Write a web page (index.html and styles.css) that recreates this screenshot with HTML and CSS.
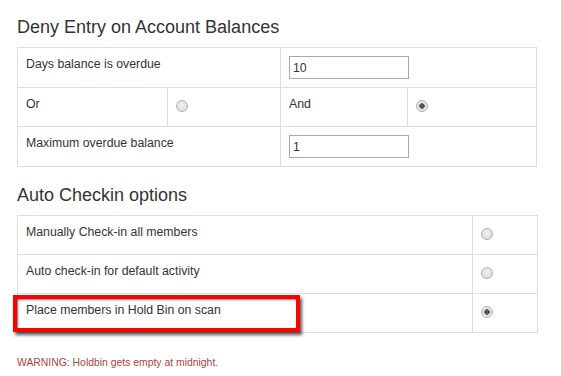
FILE: index.html
```html
<!DOCTYPE html>
<html lang="en">
<head>
    <meta charset="UTF-8">
    <meta name="viewport" content="width=device-width, initial-scale=1.0">
    <title>Member Settings</title>
    <link rel="stylesheet" href="styles.css">
</head>
<body>
    <div class="settings">
        <h2 class="section-title">Deny Entry on Account Balances</h2>
        <table class="grid deny">
            <colgroup>
                <col class="c1"><col class="c2"><col class="c3"><col class="c4">
            </colgroup>
            <tr>
                <td colspan="2">Days balance is overdue</td>
                <td colspan="2"><input type="text" class="field" value="10"></td>
            </tr>
            <tr class="choice-row">
                <td>Or</td>
                <td><input type="radio" class="radio" name="mode"></td>
                <td>And</td>
                <td><input type="radio" class="radio" name="mode" checked></td>
            </tr>
            <tr>
                <td colspan="2">Maximum overdue balance</td>
                <td colspan="2"><input type="text" class="field" value="1"></td>
            </tr>
        </table>

        <h2 class="section-title second">Auto Checkin options</h2>
        <div class="checkin">
            <table class="grid options">
                <colgroup>
                    <col class="label-col"><col class="pick-col">
                </colgroup>
                <tr>
                    <td>Manually Check-in all members</td>
                    <td><input type="radio" class="radio" name="checkin"></td>
                </tr>
                <tr>
                    <td>Auto check-in for default activity</td>
                    <td><input type="radio" class="radio" name="checkin"></td>
                </tr>
                <tr>
                    <td>Place members in Hold Bin on scan</td>
                    <td><input type="radio" class="radio" name="checkin" checked></td>
                </tr>
            </table>
            <div class="highlight"></div>
        </div>

        <p class="warning">WARNING: Holdbin gets empty at midnight.</p>
    </div>
</body>
</html>
```

FILE: styles.css
```css
body {
    margin: 0;
    background-color: #fff;
    font-family: "Liberation Sans", Arial, sans-serif;
    color: #333;
}
.settings {
    padding: 17px 0 0 17px;
}
.section-title {
    margin: 0 0 10px 0;
    font-size: 18px;
    line-height: 20px;
    font-weight: normal;
    color: #333;
}
.section-title.second {
    margin-top: 18px;
}
.grid {
    border-collapse: collapse;
    table-layout: fixed;
    width: 519px;
    font-size: 12.3px;
}
.grid td {
    border: 1px solid #ddd;
    padding: 8px;
    line-height: 17px;
    vertical-align: top;
}
.deny .c1 { width: 150px; }
.deny .c2 { width: 113px; }
.deny .c3 { width: 127px; }
.deny .c4 { width: 129px; }
.choice-row td {
    height: 22px;
}
.options {
    width: 520px;
}
.options .label-col { width: 455px; }
.options .pick-col { width: 65px; }
.options td {
    height: 22px;
}
.field {
    display: block;
    box-sizing: border-box;
    width: 120px;
    height: 23px;
    margin: 0;
    padding: 2px 3px;
    border: 1px solid #a9a9a9;
    font-family: "Liberation Sans", Arial, sans-serif;
    font-size: 12.3px;
    color: #333;
}
.radio {
    -webkit-appearance: none;
    appearance: none;
    display: block;
    box-sizing: border-box;
    width: 12px;
    height: 12px;
    margin: 4px 0 0 0;
    border: 1px solid #b4b4b4;
    border-radius: 50%;
    background: radial-gradient(circle at 50% 40%, #f0f0f0, #d8d8d8);
}
.radio:checked {
    background: radial-gradient(circle, #555 0, #555 2.5px, #e8e8e8 3px, #d8d8d8 100%);
}
.checkin {
    position: relative;
    width: 520px;
}
.highlight {
    position: absolute;
    top: 80px;
    left: -4px;
    width: 279px;
    height: 29px;
    border: 4px solid #f00;
    box-shadow: 2px 3px 3px rgba(0, 0, 0, 0.65), inset 1px 1px 2px rgba(0, 0, 0, 0.5);
}
.warning {
    margin: 24px 0 0 0;
    font-size: 10.4px;
    line-height: 12px;
    color: #a94442;
}
```
